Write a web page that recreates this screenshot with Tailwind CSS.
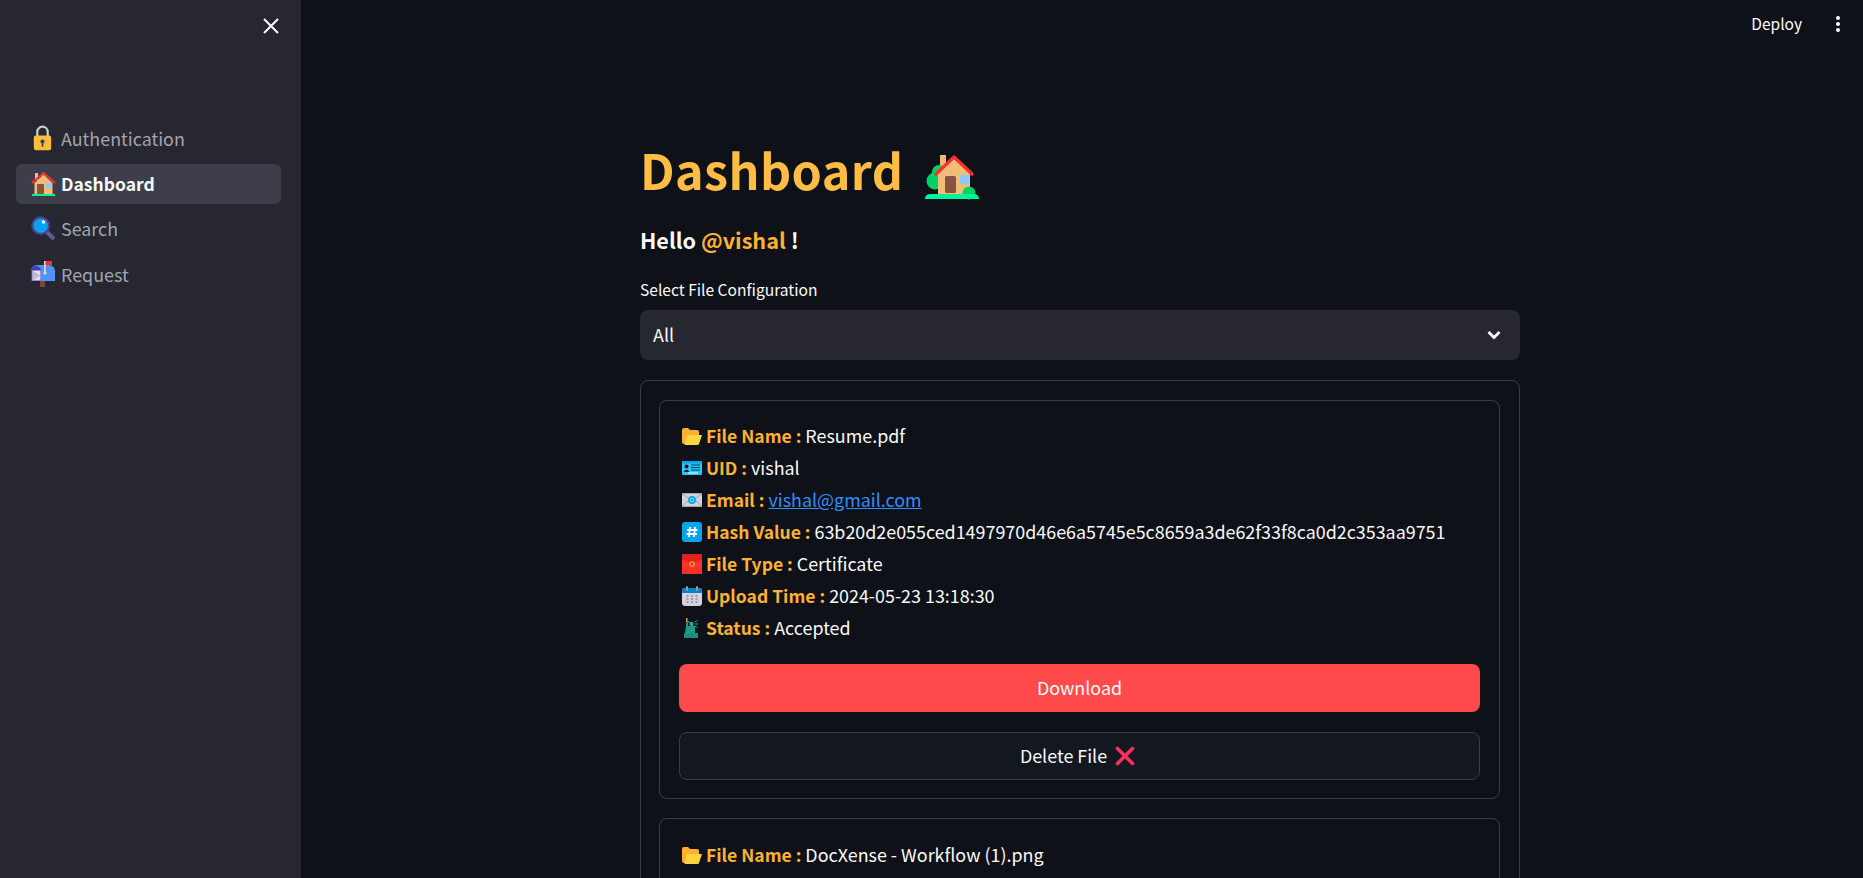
<!DOCTYPE html>
<html lang="en">
<head>
    <meta charset="UTF-8">
    <title>Dashboard</title>
    <script src="https://cdn.jsdelivr.net/npm/@tailwindcss/browser@4"></script>
</head>
<body class="bg-[#0e1117] text-[#fafafa] font-['Noto_Sans_CJK_SC','Noto_Sans',sans-serif] h-screen overflow-hidden">

    <!-- emoji drawn once, used everywhere -->
    <svg class="hidden" xmlns="http://www.w3.org/2000/svg">
        <symbol id="lock" viewBox="0 0 24 30">
            <path d="M6 14V8a6 6 0 0 1 12 0v6" fill="none" stroke="#c9ccd3" stroke-width="2.6"/>
            <rect x="2" y="12" width="20" height="17" rx="2.5" fill="#fdbd3c"/>
            <circle cx="12" cy="19" r="2.4" fill="#40395f"/>
            <rect x="11" y="19" width="2" height="6" fill="#40395f"/>
        </symbol>
        <symbol id="home" viewBox="0 0 24 24">
            <rect x="3.500" y="1" width="3" height="7" fill="#f3bd78"/>
            <path d="M3 11 12 2.500 21 11v11H3z" fill="#f3bd78"/>
            <rect x="5.500" y="12" width="7" height="10" rx="1" fill="#8a5340"/>
            <rect x="14.500" y="11" width="5" height="5" fill="#8ec8fa"/>
            <path d="M1 10.500 12 1l11 9.500" fill="none" stroke="#f8312f" stroke-width="2" stroke-linecap="round" stroke-linejoin="round"/>
            <rect x="0.500" y="22" width="23" height="2" fill="#00f397"/>
        </symbol>
        <symbol id="house" viewBox="0 0 54 48">
            <rect x="15" y="3" width="6" height="14" fill="#f0b870"/>
            <circle cx="10" cy="29" r="8.5" fill="#00d26a"/>
            <circle cx="14" cy="20" r="7" fill="#00d26a"/>
            <path d="M13 20 29 6l16 14v23H13z" fill="#f3bd78"/>
            <rect x="20" y="24" width="11" height="17" rx="1.5" fill="#8a5340"/>
            <rect x="35" y="23" width="9" height="9" fill="#8ec8fa"/>
            <path d="M11 22 29 5l18 17" fill="none" stroke="#f8312f" stroke-width="3.4" stroke-linecap="round" stroke-linejoin="round"/>
            <circle cx="44" cy="41" r="6.5" fill="#00d26a"/>
            <path d="M0 47q0-5 6-5h42q6 0 6 5z" fill="#00f397"/>
        </symbol>
        <symbol id="glass" viewBox="0 0 26 26">
            <path d="M16 16l7.5 7.5" stroke="#635994" stroke-width="4.4" stroke-linecap="round"/>
            <circle cx="10.5" cy="10.5" r="9" fill="#00a6ed" stroke="#533f8f" stroke-width="2.4"/>
            <circle cx="13.5" cy="6.5" r="1.8" fill="#fff"/>
        </symbol>
        <symbol id="mailbox" viewBox="0 0 24 26">
            <rect x="9" y="19" width="5" height="7" fill="#7d4533"/>
            <path d="M0 20V10a6 6 0 0 1 6-6h12a6 6 0 0 1 6 6v10z" fill="#5092ff"/>
            <path d="M0 20V10a5 5 0 0 1 10 0v10z" fill="#3f3fbf"/>
            <path d="M1.500 9.500h8v10h-8z" fill="#e6e0ea"/>
            <path d="M1.500 9.500l8 5-8 5z" fill="#c4b8cf"/>
            <rect x="13" y="0" width="1.800" height="13" fill="#d3d3d3"/>
            <circle cx="14" cy="12" r="1.800" fill="#d3d3d3"/>
            <rect x="15" y="0" width="6" height="4" fill="#f8312f"/>
        </symbol>
        <symbol id="folder" viewBox="0 0 20 20">
            <path d="M0 4a2 2 0 0 1 2-2h4l2 2h7a2 2 0 0 1 2 2v12H2a2 2 0 0 1-2-2z" fill="#ffb02e"/>
            <path d="M2.500 19 5 9h15l-3 9a1.500 1.500 0 0 1-1.400 1z" fill="#fcd53f"/>
        </symbol>
        <symbol id="card" viewBox="0 0 20 20">
            <rect y="3" width="20" height="14" rx="1.500" fill="#26c9fc"/>
            <rect y="3" width="20" height="2.400" fill="#00a6ed"/>
            <circle cx="4.500" cy="8.500" r="2" fill="#1c1c1c"/>
            <path d="M1.500 14q3-5 6 0z" fill="#1c1c1c"/>
            <path d="M9 7h9M9 9.500h9M9 12h9" stroke="#0b3a52" stroke-width="1"/>
            <path d="M6 15h10" stroke="#e8f6fc" stroke-width="1"/>
        </symbol>
        <symbol id="mail" viewBox="0 0 22 20">
            <rect y="2.500" width="22" height="15" rx="1" fill="#d3d3dd"/>
            <path d="M0 3l11 8 11-8M0 17.500l8-8M22 17.500l-8-8" fill="none" stroke="#9b9bad" stroke-width="1"/>
            <circle cx="11" cy="10" r="4.300" fill="#00a6ed"/>
            <circle cx="11" cy="10" r="2" fill="none" stroke="#d3f2ff" stroke-width=".8"/>
        </symbol>
        <symbol id="hash" viewBox="0 0 20 20">
            <rect width="20" height="20" rx="3" fill="#00a6ed"/>
            <path d="M8 5 7 15M13 5l-1 10M5 8h10.500M4.500 12H15" stroke="#fff" stroke-width="1.800"/>
        </symbol>
        <symbol id="redmail" viewBox="0 0 20 20">
            <rect width="20" height="20" fill="#f8312f"/>
            <path d="M0 0h20v5l-10 5L0 5z" fill="#e2211f"/>
            <circle cx="10" cy="10" r="3" fill="#ffb02e" opacity=".7"/>
            <circle cx="10" cy="10" r="1" fill="#ca0b4a"/>
        </symbol>
        <symbol id="calendar" viewBox="0 0 20 20">
            <rect y="2" width="20" height="18" rx="3" fill="#d3d3dd"/>
            <path d="M0 7V5a3 3 0 0 1 3-3h14a3 3 0 0 1 3 3v2z" fill="#0084ce"/>
            <rect x="4" y="0" width="2" height="5" rx="1" fill="#9b9b9b"/>
            <rect x="14" y="0" width="2" height="5" rx="1" fill="#9b9b9b"/>
            <path d="M4.500 10h2M9 10h2M13.500 10h2M4.500 13h2M9 13h2M13.500 13h2M4.500 16h2M9 16h2M13.500 16h2" stroke="#9b9bb3" stroke-width="2"/>
        </symbol>
        <symbol id="statue" viewBox="0 0 20 20">
            <rect x="4" y="0" width="1.600" height="5" fill="#f9824a"/>
            <path d="M4 4h2v5H4z" fill="#1c8d7f"/>
            <circle cx="9.500" cy="6" r="2.200" fill="#2aa893"/>
            <path d="M6 3l1.500 2M12.500 4l3-1.500M13 6h3.500M12.500 8l3 1.500" stroke="#2aa893" stroke-width="1"/>
            <path d="M4 8h9v7H3z" fill="#1c9b87"/>
            <path d="M2 15h14v5H2z" fill="#1c8d7f"/>
        </symbol>
        <symbol id="cross" viewBox="0 0 20 20">
            <path d="M2.500 2.500l15 15M17.500 2.500l-15 15" stroke="#f92f60" stroke-width="3.600" stroke-linecap="round"/>
        </symbol>
    </svg>

    <div class="flex h-screen">
        <aside class="w-[301px] shrink-0 bg-[#262730] pl-4 pr-5">
            <div class="flex justify-end h-[119px] pt-[16px]">
                <svg class="w-5 h-5" viewBox="0 0 20 20" fill="none" stroke="#fafafa" stroke-width="2"><path d="M3 3l14 14M17 3 3 17"/></svg>
            </div>
            <nav class="flex flex-col gap-[5px] text-[17.900px] leading-[40px] text-[#a3a5ad]">
                <a class="flex items-center gap-[6px] h-10 px-[15px] pb-[2px] rounded-md"><svg class="w-[21px] h-[26px] ml-[1px]"><use href="#lock"/></svg><span class="ml-[2px]">Authentication</span></a>
                <a class="flex items-center gap-[5px] h-10 pl-[15px] pr-[15px] rounded-md bg-[#3d3e49] text-[#fafafa] font-bold text-[17.500px]"><svg class="w-[25px] h-[24px]"><use href="#home"/></svg>Dashboard</a>
                <a class="flex items-center gap-[6px] h-10 px-[15px] pb-[2px] rounded-md"><svg class="w-[24px] h-[24px]"><use href="#glass"/></svg>Search</a>
                <a class="flex items-center gap-[6px] h-10 px-[15px] rounded-md"><svg class="w-[24px] h-[26px]"><use href="#mailbox"/></svg>Request</a>
            </nav>
        </aside>

        <main class="flex-1 relative pl-[339px] overflow-hidden">
            <div class="absolute top-0 right-0 flex items-center h-12 pr-[22px] text-[15.500px]">
                <span class="mr-[33px]">Deploy</span>
                <svg class="w-[6px] h-[16px]" viewBox="0 0 6 16" fill="#fafafa"><circle cx="3" cy="2" r="2"/><circle cx="3" cy="8" r="2"/><circle cx="3" cy="14" r="2"/></svg>
            </div>

            <div class="w-[880px] pt-[134px]">
                <h1 class="flex items-center text-[#ffbd45] text-[48.500px] font-bold leading-[70px] tracking-[0.4px] mb-[20px]">
                    Dashboard
                    <svg class="w-[54px] h-[48px] ml-[22px] mt-[13px]"><use href="#house"/></svg>
                </h1>
                <p class="text-[21.600px] font-bold leading-[32px] mb-[22px]">Hello <span class="text-[#ffb133]">@vishal</span> !</p>
                <label class="block text-[15.600px] leading-[22px] mb-[10px]">Select File Configuration</label>
                <div class="flex items-center justify-between h-[50px] rounded-lg bg-[#262730] pl-[13px] pr-[18px] pb-[2px] text-[17.900px]">
                    All
                    <svg class="w-[16px] h-[16px] mt-[2px]" viewBox="0 0 16 16" fill="none" stroke="#fafafa" stroke-width="2.800"><path d="M2.500 5 8 10.500 13.500 5"/></svg>
                </div>

                <div class="mt-[20px] border border-[#3b3d45] rounded-lg pl-[18px] pr-[19px] pt-[19px] flex flex-col gap-[19px]">
                    <section class="border border-[#3b3d45] rounded-lg px-[19px] pt-[19px] pb-[18px]">
                        <ul class="text-[17.900px] leading-[32px] pl-[3px]">
                            <li class="flex items-center gap-[4px] h-8 pb-[1px]"><svg class="w-5 h-5"><use href="#folder"/></svg><span><b class="font-bold text-[17.500px] text-[#ffb133]">File Name :</b> Resume.pdf</span></li>
                            <li class="flex items-center gap-[4px] h-8 pb-[1px]"><svg class="w-5 h-5"><use href="#card"/></svg><span><b class="font-bold text-[17.500px] text-[#ffb133]">UID :</b> vishal</span></li>
                            <li class="flex items-center gap-[4px] h-8 pb-[1px]"><svg class="w-5 h-5"><use href="#mail"/></svg><span><b class="font-bold text-[17.500px] text-[#ffb133]">Email :</b> <a class="text-[#3090ff] underline">vishal@gmail.com</a></span></li>
                            <li class="flex items-center gap-[4px] h-8 pb-[1px]"><svg class="w-5 h-5"><use href="#hash"/></svg><span><b class="font-bold text-[17.500px] text-[#ffb133]">Hash Value :</b> 63b20d2e055ced1497970d46e6a5745e5c8659a3de62f33f8ca0d2c353aa9751</span></li>
                            <li class="flex items-center gap-[4px] h-8 pb-[1px]"><svg class="w-5 h-5"><use href="#redmail"/></svg><span><b class="font-bold text-[17.500px] text-[#ffb133]">File Type :</b> Certificate</span></li>
                            <li class="flex items-center gap-[4px] h-8 pb-[1px]"><svg class="w-5 h-5"><use href="#calendar"/></svg><span><b class="font-bold text-[17.500px] text-[#ffb133]">Upload Time :</b> 2024-05-23 13:18:30</span></li>
                            <li class="flex items-center gap-[4px] h-8 pb-[1px]"><svg class="w-5 h-5"><use href="#statue"/></svg><span><b class="font-bold text-[17.500px] text-[#ffb133]">Status :</b> Accepted</span></li>
                        </ul>
                        <button class="mt-[20px] w-full h-12 rounded-lg bg-[#ff4b4b] text-[17.900px] pb-[1px]">Download</button>
                        <button class="mt-[20px] w-full h-12 rounded-lg bg-[#13171f] border border-[#3b3d45] text-[17.900px] pr-[4px] pb-[1px] flex items-center justify-center gap-[8px]">Delete File <svg class="w-5 h-5"><use href="#cross"/></svg></button>
                    </section>
                    <section class="border border-[#3b3d45] rounded-lg px-[19px] pt-[20px] pb-[19px]">
                        <ul class="text-[17.900px] leading-[32px] pl-[3px]">
                            <li class="flex items-center gap-[4px] h-8 pb-[1px]"><svg class="w-5 h-5"><use href="#folder"/></svg><span><b class="font-bold text-[17.500px] text-[#ffb133]">File Name :</b> DocXense - Workflow (1).png</span></li>
                        </ul>
                    </section>
                </div>
            </div>
        </main>
    </div>
</body>
</html>
